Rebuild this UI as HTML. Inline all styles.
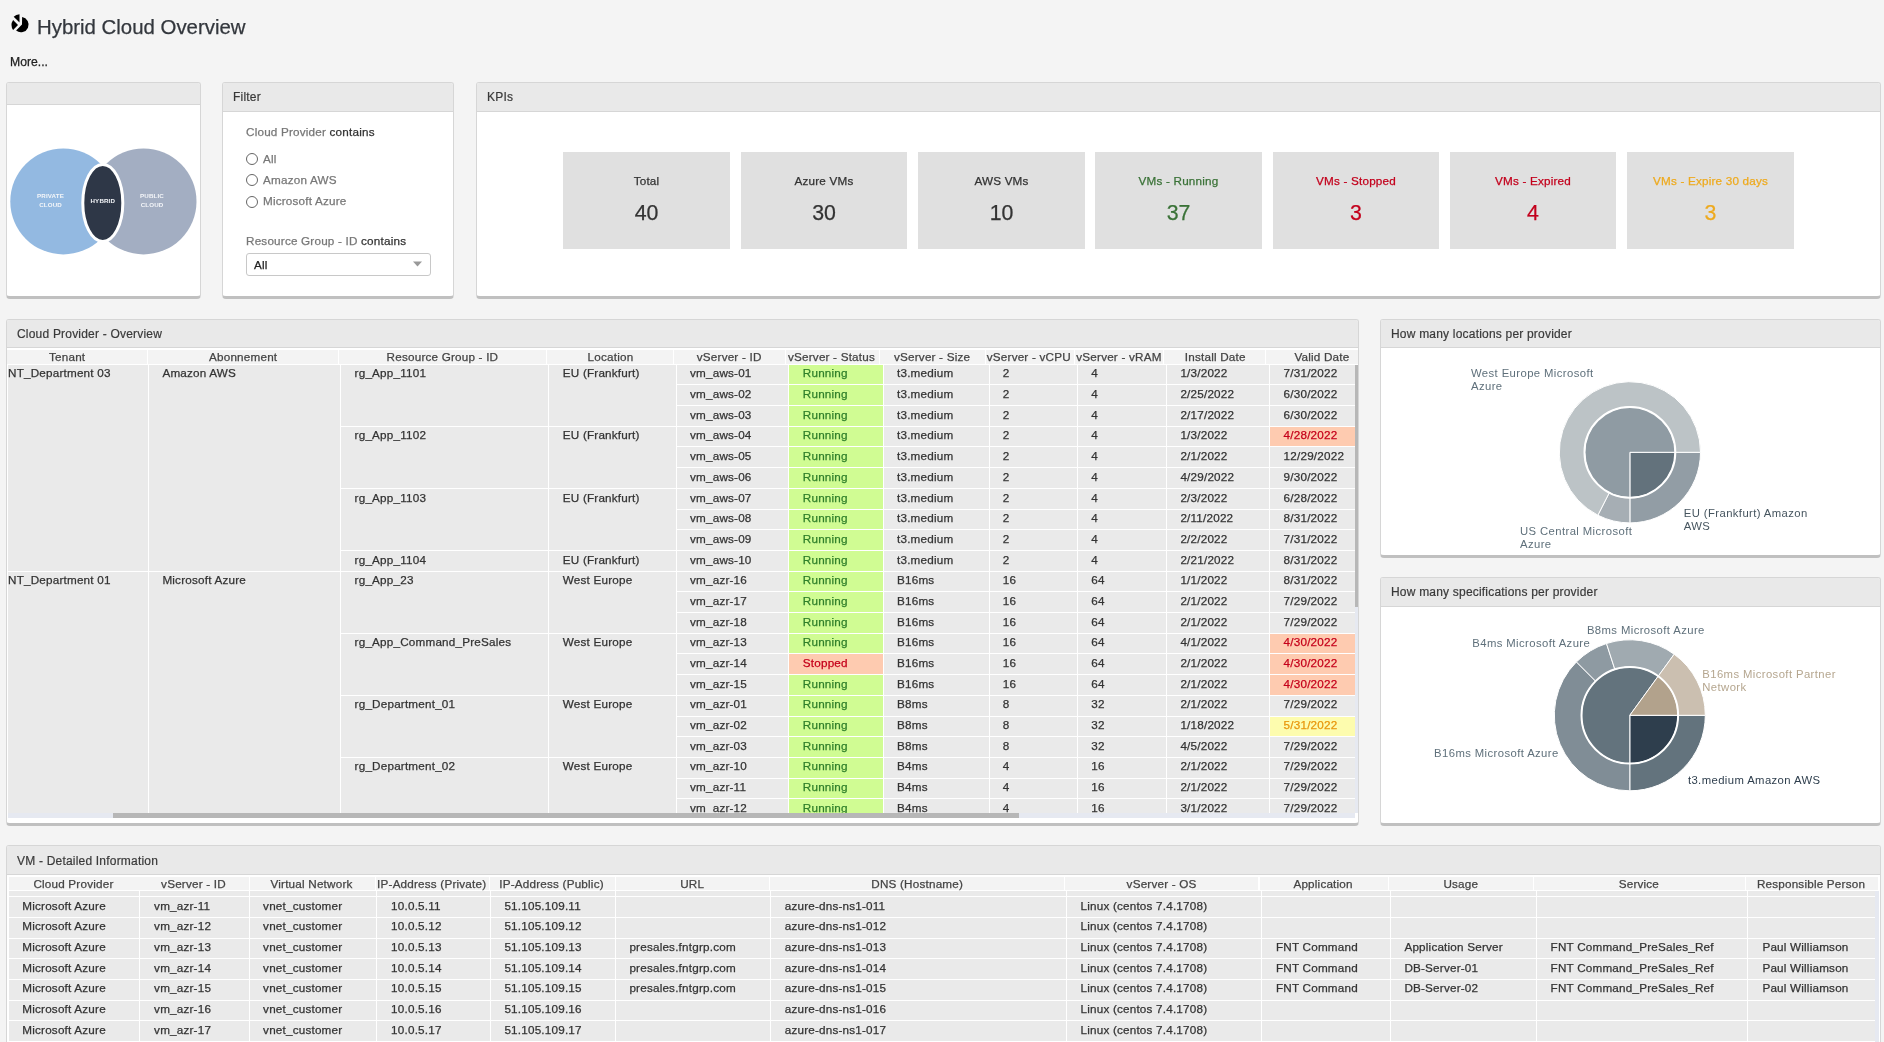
<!DOCTYPE html><html><head><meta charset="utf-8"><title>Hybrid Cloud Overview</title><style>
*{margin:0;padding:0;box-sizing:border-box}
html,body{width:1884px;height:1042px;overflow:hidden;background:#f4f4f4;font-family:"Liberation Sans", sans-serif;color:#333}
.a{position:absolute}
.pn{position:absolute;background:#fff;border:1px solid #d6d6d6;border-bottom:3px solid #c0c0c0;border-radius:3px 3px 4px 4px;overflow:hidden}
.ph{position:absolute;left:0;right:0;top:0;background:#e9e9e9;border-bottom:1px solid #d6d6d6}
.pt{position:absolute;font-size:12px;letter-spacing:0.2px;color:#3a3a3a;white-space:nowrap;line-height:14px;-webkit-text-stroke:0.2px currentColor}
.t{position:absolute;white-space:nowrap;font-size:12.2px;line-height:14px;color:#333;-webkit-text-stroke:0.25px currentColor}
.c{position:absolute;background:#eaeaea}
.hc{position:absolute;background:#f3f3f3;text-align:center;font-size:12.2px;line-height:14px;color:#444;white-space:nowrap;overflow:hidden}
</style></head><body><div style="position:absolute;left:0;top:0;width:1884px;height:1042px;overflow:hidden;will-change:transform">
<svg class="a" style="left:0;top:0" width="40" height="40" viewBox="0 0 40 40"><path d="M22,24.6 L22.1,17 A7.7,7.7 0 1 1 16.1,30.6 Z" fill="#000"/><path d="M19.5,22.5 L19.5,14.2 A8.3,8.3 0 0 0 13.7,16.7 Z" fill="#000"/><path d="M18,25 L13.1,20 A9.2,9.2 0 0 0 13.1,30 Z" fill="#000"/></svg>
<div class="t" style="left:37px;top:15px;font-size:20.4px;line-height:24px;color:#33373d">Hybrid Cloud Overview</div>
<div class="t" style="left:10px;top:55px;font-size:12.2px;color:#222">More...</div>
<div class="pn" style="left:6px;top:82px;width:195px;height:217px"><div class="ph" style="height:22px"></div></div>
<div class="pn" style="left:222px;top:82px;width:232px;height:217px"><div class="ph" style="height:29px"></div></div>
<div class="pt" style="left:233px;top:90px">Filter</div>
<div class="pn" style="left:476px;top:82px;width:1405px;height:217px"><div class="ph" style="height:29px"></div></div>
<div class="pt" style="left:487px;top:90px">KPIs</div>
<svg class="a" style="left:0;top:140px" width="210" height="130" viewBox="0 140 210 130"><circle cx="63.3" cy="201.4" r="53" fill="#93b9e1"/><circle cx="143.5" cy="201.4" r="53" fill="#a3aec2"/><ellipse cx="102.8" cy="202.9" rx="20" ry="38.5" fill="#2e3747" stroke="#fff" stroke-width="3"/><g font-family="Liberation Sans" font-weight="bold" font-size="6.2" letter-spacing="0.15" fill="#f4f6f9" text-anchor="middle"><text x="50.5" y="198">PRIVATE</text><text x="50.5" y="206.5">CLOUD</text><text x="102.8" y="203">HYBRID</text><text x="152" y="198">PUBLIC</text><text x="152" y="206.5">CLOUD</text></g></svg>
<div class="t" style="left:246px;top:125.2px;font-size:11.7px;letter-spacing:0.2px;color:#777">Cloud Provider <span style="color:#333">contains</span></div>
<div class="a" style="left:246px;top:153.0px;width:12px;height:12px;border:1px solid #666;border-radius:50%;background:#fff"></div>
<div class="t" style="left:263px;top:152.3px;font-size:11.7px;letter-spacing:0.2px;color:#777">All</div>
<div class="a" style="left:246px;top:174.3px;width:12px;height:12px;border:1px solid #666;border-radius:50%;background:#fff"></div>
<div class="t" style="left:263px;top:173.4px;font-size:11.7px;letter-spacing:0.2px;color:#777">Amazon AWS</div>
<div class="a" style="left:246px;top:195.7px;width:12px;height:12px;border:1px solid #666;border-radius:50%;background:#fff"></div>
<div class="t" style="left:263px;top:194.3px;font-size:11.7px;letter-spacing:0.2px;color:#777">Microsoft Azure</div>
<div class="t" style="left:246px;top:234.2px;font-size:11.7px;letter-spacing:0.2px;color:#777">Resource Group - ID <span style="color:#333">contains</span></div>
<div class="a" style="left:246px;top:253px;width:185px;height:23px;border:1px solid #c8c8c8;border-radius:3px;background:#fff"></div>
<div class="t" style="left:254px;top:258.2px;font-size:11.7px;letter-spacing:0.2px;color:#222">All</div>
<svg class="a" style="left:412px;top:260px" width="12" height="8"><path d="M1,1.5 L10,1.5 L5.5,6.5 Z" fill="#999"/></svg>
<div class="a" style="left:563px;top:152px;width:167px;height:97px;background:#e0e0e0"></div>
<div class="t" style="left:563px;top:174.2px;width:167px;text-align:center;font-size:11.7px;letter-spacing:0.2px;color:#333">Total</div>
<div class="t" style="left:563px;top:200.7px;width:167px;text-align:center;font-size:21.3px;line-height:24px;color:#333">40</div>
<div class="a" style="left:741px;top:152px;width:166px;height:97px;background:#e0e0e0"></div>
<div class="t" style="left:741px;top:174.2px;width:166px;text-align:center;font-size:11.7px;letter-spacing:0.2px;color:#333">Azure VMs</div>
<div class="t" style="left:741px;top:200.7px;width:166px;text-align:center;font-size:21.3px;line-height:24px;color:#333">30</div>
<div class="a" style="left:918px;top:152px;width:167px;height:97px;background:#e0e0e0"></div>
<div class="t" style="left:918px;top:174.2px;width:167px;text-align:center;font-size:11.7px;letter-spacing:0.2px;color:#333">AWS VMs</div>
<div class="t" style="left:918px;top:200.7px;width:167px;text-align:center;font-size:21.3px;line-height:24px;color:#333">10</div>
<div class="a" style="left:1095px;top:152px;width:167px;height:97px;background:#e0e0e0"></div>
<div class="t" style="left:1095px;top:174.2px;width:167px;text-align:center;font-size:11.7px;letter-spacing:0.2px;color:#3a7237">VMs - Running</div>
<div class="t" style="left:1095px;top:200.7px;width:167px;text-align:center;font-size:21.3px;line-height:24px;color:#3a7237">37</div>
<div class="a" style="left:1273px;top:152px;width:166px;height:97px;background:#e0e0e0"></div>
<div class="t" style="left:1273px;top:174.2px;width:166px;text-align:center;font-size:11.7px;letter-spacing:0.2px;color:#c3001c">VMs - Stopped</div>
<div class="t" style="left:1273px;top:200.7px;width:166px;text-align:center;font-size:21.3px;line-height:24px;color:#c3001c">3</div>
<div class="a" style="left:1450px;top:152px;width:166px;height:97px;background:#e0e0e0"></div>
<div class="t" style="left:1450px;top:174.2px;width:166px;text-align:center;font-size:11.7px;letter-spacing:0.2px;color:#c3001c">VMs - Expired</div>
<div class="t" style="left:1450px;top:200.7px;width:166px;text-align:center;font-size:21.3px;line-height:24px;color:#c3001c">4</div>
<div class="a" style="left:1627px;top:152px;width:167px;height:97px;background:#e0e0e0"></div>
<div class="t" style="left:1627px;top:174.2px;width:167px;text-align:center;font-size:11.7px;letter-spacing:0.2px;color:#eeaa1e">VMs - Expire 30 days</div>
<div class="t" style="left:1627px;top:200.7px;width:167px;text-align:center;font-size:21.3px;line-height:24px;color:#eeaa1e">3</div>
<div class="pn" style="left:6px;top:319px;width:1353px;height:507px"><div class="ph" style="height:28px"></div></div>
<div class="pt" style="left:17px;top:327px">Cloud Provider - Overview</div>
<div class="pn" style="left:1380px;top:319px;width:501px;height:239px"><div class="ph" style="height:28px"></div></div>
<div class="pt" style="left:1391px;top:327px">How many locations per provider</div>
<div class="pn" style="left:1380px;top:577px;width:501px;height:249px"><div class="ph" style="height:29px"></div></div>
<div class="pt" style="left:1391px;top:585px">How many specifications per provider</div>
<div class="pn" style="left:6px;top:845px;width:1875px;height:255px"><div class="ph" style="height:29px"></div></div>
<div class="pt" style="left:17px;top:854px">VM - Detailed Information</div>
<div class="a" style="left:7.00px;top:348.00px;width:1351.00px;height:470.00px;background:#fff;"></div>
<div class="a" style="left:7.00px;top:349.50px;width:140.00px;height:14.30px;background:#f3f3f3;"></div>
<div class="t" style="left:49.0px;top:349.15px;font-size:11.7px;line-height:16px;color:#444;letter-spacing:0.2px;">Tenant</div>
<div class="a" style="left:148.00px;top:349.50px;width:190.00px;height:14.30px;background:#f3f3f3;"></div>
<div class="t" style="left:209.0px;top:349.15px;font-size:11.7px;line-height:16px;color:#444;letter-spacing:0.2px;">Abonnement</div>
<div class="a" style="left:339.00px;top:349.50px;width:207.00px;height:14.30px;background:#f3f3f3;"></div>
<div class="t" style="left:386.6px;top:349.15px;font-size:11.7px;line-height:16px;color:#444;letter-spacing:0.2px;">Resource Group - ID</div>
<div class="a" style="left:547.00px;top:349.50px;width:126.00px;height:14.30px;background:#f3f3f3;"></div>
<div class="t" style="left:587.6px;top:349.15px;font-size:11.7px;line-height:16px;color:#444;letter-spacing:0.2px;">Location</div>
<div class="a" style="left:674.00px;top:349.50px;width:111.00px;height:14.30px;background:#f3f3f3;"></div>
<div class="t" style="left:696.8px;top:349.15px;font-size:11.7px;line-height:16px;color:#444;letter-spacing:0.2px;">vServer - ID</div>
<div class="a" style="left:786.00px;top:349.50px;width:93.00px;height:14.30px;background:#f3f3f3;"></div>
<div class="t" style="left:788.0px;top:349.15px;font-size:11.7px;line-height:16px;color:#444;letter-spacing:0.2px;">vServer - Status</div>
<div class="a" style="left:880.00px;top:349.50px;width:105.00px;height:14.30px;background:#f3f3f3;"></div>
<div class="t" style="left:894.0px;top:349.15px;font-size:11.7px;line-height:16px;color:#444;letter-spacing:0.2px;">vServer - Size</div>
<div class="a" style="left:986.00px;top:349.50px;width:88.00px;height:14.30px;background:#f3f3f3;"></div>
<div class="t" style="left:986.8px;top:349.15px;font-size:11.7px;line-height:16px;color:#444;letter-spacing:0.2px;">vServer - vCPU</div>
<div class="a" style="left:1075.00px;top:349.50px;width:88.00px;height:14.30px;background:#f3f3f3;"></div>
<div class="t" style="left:1076.3px;top:349.15px;font-size:11.7px;line-height:16px;color:#444;letter-spacing:0.2px;">vServer - vRAM</div>
<div class="a" style="left:1164.00px;top:349.50px;width:101.00px;height:14.30px;background:#f3f3f3;"></div>
<div class="t" style="left:1184.8px;top:349.15px;font-size:11.7px;line-height:16px;color:#444;letter-spacing:0.2px;">Install Date</div>
<div class="a" style="left:1266.00px;top:349.50px;width:92.00px;height:14.30px;background:#f3f3f3;"></div>
<div class="t" style="left:1294.4px;top:349.15px;font-size:11.7px;line-height:16px;color:#444;letter-spacing:0.2px;">Valid Date</div>
<div class="a" style="left:0;top:0;width:1884px;height:812.7px;overflow:hidden">
<div class="a" style="left:677.00px;top:365.00px;width:111.00px;height:19.00px;background:#eaeaea;"></div>
<div class="a" style="left:789.00px;top:365.00px;width:94.00px;height:19.00px;background:#d0fc93;"></div>
<div class="a" style="left:884.00px;top:365.00px;width:105.00px;height:19.00px;background:#eaeaea;"></div>
<div class="a" style="left:990.00px;top:365.00px;width:87.00px;height:19.00px;background:#eaeaea;"></div>
<div class="a" style="left:1078.00px;top:365.00px;width:88.00px;height:19.00px;background:#eaeaea;"></div>
<div class="a" style="left:1167.00px;top:365.00px;width:102.00px;height:19.00px;background:#eaeaea;"></div>
<div class="a" style="left:1270.00px;top:365.00px;width:85.00px;height:19.00px;background:#eaeaea;"></div>
<div class="t" style="left:690.0px;top:365.15px;font-size:11.7px;line-height:16px;color:#333;letter-spacing:0.2px;">vm_aws-01</div>
<div class="t" style="left:802.8px;top:365.15px;font-size:11.7px;line-height:16px;color:#2f7f2a;letter-spacing:0.2px;">Running</div>
<div class="t" style="left:897.0px;top:365.15px;font-size:11.7px;line-height:16px;color:#333;letter-spacing:0.2px;">t3.medium</div>
<div class="t" style="left:1002.7px;top:365.15px;font-size:11.7px;line-height:16px;color:#333;letter-spacing:0.2px;">2</div>
<div class="t" style="left:1091.2px;top:365.15px;font-size:11.7px;line-height:16px;color:#333;letter-spacing:0.2px;">4</div>
<div class="t" style="left:1180.4px;top:365.15px;font-size:11.7px;line-height:16px;color:#333;letter-spacing:0.2px;">1/3/2022</div>
<div class="t" style="left:1283.6px;top:365.15px;font-size:11.7px;line-height:16px;color:#333;letter-spacing:0.2px;">7/31/2022</div>
<div class="a" style="left:677.00px;top:385.00px;width:111.00px;height:20.00px;background:#eaeaea;"></div>
<div class="a" style="left:789.00px;top:385.00px;width:94.00px;height:20.00px;background:#d0fc93;"></div>
<div class="a" style="left:884.00px;top:385.00px;width:105.00px;height:20.00px;background:#eaeaea;"></div>
<div class="a" style="left:990.00px;top:385.00px;width:87.00px;height:20.00px;background:#eaeaea;"></div>
<div class="a" style="left:1078.00px;top:385.00px;width:88.00px;height:20.00px;background:#eaeaea;"></div>
<div class="a" style="left:1167.00px;top:385.00px;width:102.00px;height:20.00px;background:#eaeaea;"></div>
<div class="a" style="left:1270.00px;top:385.00px;width:85.00px;height:20.00px;background:#eaeaea;"></div>
<div class="t" style="left:690.0px;top:386.15px;font-size:11.7px;line-height:16px;color:#333;letter-spacing:0.2px;">vm_aws-02</div>
<div class="t" style="left:802.8px;top:386.15px;font-size:11.7px;line-height:16px;color:#2f7f2a;letter-spacing:0.2px;">Running</div>
<div class="t" style="left:897.0px;top:386.15px;font-size:11.7px;line-height:16px;color:#333;letter-spacing:0.2px;">t3.medium</div>
<div class="t" style="left:1002.7px;top:386.15px;font-size:11.7px;line-height:16px;color:#333;letter-spacing:0.2px;">2</div>
<div class="t" style="left:1091.2px;top:386.15px;font-size:11.7px;line-height:16px;color:#333;letter-spacing:0.2px;">4</div>
<div class="t" style="left:1180.4px;top:386.15px;font-size:11.7px;line-height:16px;color:#333;letter-spacing:0.2px;">2/25/2022</div>
<div class="t" style="left:1283.6px;top:386.15px;font-size:11.7px;line-height:16px;color:#333;letter-spacing:0.2px;">6/30/2022</div>
<div class="a" style="left:677.00px;top:406.00px;width:111.00px;height:20.00px;background:#eaeaea;"></div>
<div class="a" style="left:789.00px;top:406.00px;width:94.00px;height:20.00px;background:#d0fc93;"></div>
<div class="a" style="left:884.00px;top:406.00px;width:105.00px;height:20.00px;background:#eaeaea;"></div>
<div class="a" style="left:990.00px;top:406.00px;width:87.00px;height:20.00px;background:#eaeaea;"></div>
<div class="a" style="left:1078.00px;top:406.00px;width:88.00px;height:20.00px;background:#eaeaea;"></div>
<div class="a" style="left:1167.00px;top:406.00px;width:102.00px;height:20.00px;background:#eaeaea;"></div>
<div class="a" style="left:1270.00px;top:406.00px;width:85.00px;height:20.00px;background:#eaeaea;"></div>
<div class="t" style="left:690.0px;top:407.15px;font-size:11.7px;line-height:16px;color:#333;letter-spacing:0.2px;">vm_aws-03</div>
<div class="t" style="left:802.8px;top:407.15px;font-size:11.7px;line-height:16px;color:#2f7f2a;letter-spacing:0.2px;">Running</div>
<div class="t" style="left:897.0px;top:407.15px;font-size:11.7px;line-height:16px;color:#333;letter-spacing:0.2px;">t3.medium</div>
<div class="t" style="left:1002.7px;top:407.15px;font-size:11.7px;line-height:16px;color:#333;letter-spacing:0.2px;">2</div>
<div class="t" style="left:1091.2px;top:407.15px;font-size:11.7px;line-height:16px;color:#333;letter-spacing:0.2px;">4</div>
<div class="t" style="left:1180.4px;top:407.15px;font-size:11.7px;line-height:16px;color:#333;letter-spacing:0.2px;">2/17/2022</div>
<div class="t" style="left:1283.6px;top:407.15px;font-size:11.7px;line-height:16px;color:#333;letter-spacing:0.2px;">6/30/2022</div>
<div class="a" style="left:677.00px;top:427.00px;width:111.00px;height:19.00px;background:#eaeaea;"></div>
<div class="a" style="left:789.00px;top:427.00px;width:94.00px;height:19.00px;background:#d0fc93;"></div>
<div class="a" style="left:884.00px;top:427.00px;width:105.00px;height:19.00px;background:#eaeaea;"></div>
<div class="a" style="left:990.00px;top:427.00px;width:87.00px;height:19.00px;background:#eaeaea;"></div>
<div class="a" style="left:1078.00px;top:427.00px;width:88.00px;height:19.00px;background:#eaeaea;"></div>
<div class="a" style="left:1167.00px;top:427.00px;width:102.00px;height:19.00px;background:#eaeaea;"></div>
<div class="a" style="left:1270.00px;top:427.00px;width:85.00px;height:19.00px;background:#fecbb0;"></div>
<div class="t" style="left:690.0px;top:427.15px;font-size:11.7px;line-height:16px;color:#333;letter-spacing:0.2px;">vm_aws-04</div>
<div class="t" style="left:802.8px;top:427.15px;font-size:11.7px;line-height:16px;color:#2f7f2a;letter-spacing:0.2px;">Running</div>
<div class="t" style="left:897.0px;top:427.15px;font-size:11.7px;line-height:16px;color:#333;letter-spacing:0.2px;">t3.medium</div>
<div class="t" style="left:1002.7px;top:427.15px;font-size:11.7px;line-height:16px;color:#333;letter-spacing:0.2px;">2</div>
<div class="t" style="left:1091.2px;top:427.15px;font-size:11.7px;line-height:16px;color:#333;letter-spacing:0.2px;">4</div>
<div class="t" style="left:1180.4px;top:427.15px;font-size:11.7px;line-height:16px;color:#333;letter-spacing:0.2px;">1/3/2022</div>
<div class="t" style="left:1283.6px;top:427.15px;font-size:11.7px;line-height:16px;color:#c5001a;letter-spacing:0.2px;">4/28/2022</div>
<div class="a" style="left:677.00px;top:447.00px;width:111.00px;height:20.00px;background:#eaeaea;"></div>
<div class="a" style="left:789.00px;top:447.00px;width:94.00px;height:20.00px;background:#d0fc93;"></div>
<div class="a" style="left:884.00px;top:447.00px;width:105.00px;height:20.00px;background:#eaeaea;"></div>
<div class="a" style="left:990.00px;top:447.00px;width:87.00px;height:20.00px;background:#eaeaea;"></div>
<div class="a" style="left:1078.00px;top:447.00px;width:88.00px;height:20.00px;background:#eaeaea;"></div>
<div class="a" style="left:1167.00px;top:447.00px;width:102.00px;height:20.00px;background:#eaeaea;"></div>
<div class="a" style="left:1270.00px;top:447.00px;width:85.00px;height:20.00px;background:#eaeaea;"></div>
<div class="t" style="left:690.0px;top:448.15px;font-size:11.7px;line-height:16px;color:#333;letter-spacing:0.2px;">vm_aws-05</div>
<div class="t" style="left:802.8px;top:448.15px;font-size:11.7px;line-height:16px;color:#2f7f2a;letter-spacing:0.2px;">Running</div>
<div class="t" style="left:897.0px;top:448.15px;font-size:11.7px;line-height:16px;color:#333;letter-spacing:0.2px;">t3.medium</div>
<div class="t" style="left:1002.7px;top:448.15px;font-size:11.7px;line-height:16px;color:#333;letter-spacing:0.2px;">2</div>
<div class="t" style="left:1091.2px;top:448.15px;font-size:11.7px;line-height:16px;color:#333;letter-spacing:0.2px;">4</div>
<div class="t" style="left:1180.4px;top:448.15px;font-size:11.7px;line-height:16px;color:#333;letter-spacing:0.2px;">2/1/2022</div>
<div class="t" style="left:1283.6px;top:448.15px;font-size:11.7px;line-height:16px;color:#333;letter-spacing:0.2px;">12/29/2022</div>
<div class="a" style="left:677.00px;top:468.00px;width:111.00px;height:20.00px;background:#eaeaea;"></div>
<div class="a" style="left:789.00px;top:468.00px;width:94.00px;height:20.00px;background:#d0fc93;"></div>
<div class="a" style="left:884.00px;top:468.00px;width:105.00px;height:20.00px;background:#eaeaea;"></div>
<div class="a" style="left:990.00px;top:468.00px;width:87.00px;height:20.00px;background:#eaeaea;"></div>
<div class="a" style="left:1078.00px;top:468.00px;width:88.00px;height:20.00px;background:#eaeaea;"></div>
<div class="a" style="left:1167.00px;top:468.00px;width:102.00px;height:20.00px;background:#eaeaea;"></div>
<div class="a" style="left:1270.00px;top:468.00px;width:85.00px;height:20.00px;background:#eaeaea;"></div>
<div class="t" style="left:690.0px;top:469.15px;font-size:11.7px;line-height:16px;color:#333;letter-spacing:0.2px;">vm_aws-06</div>
<div class="t" style="left:802.8px;top:469.15px;font-size:11.7px;line-height:16px;color:#2f7f2a;letter-spacing:0.2px;">Running</div>
<div class="t" style="left:897.0px;top:469.15px;font-size:11.7px;line-height:16px;color:#333;letter-spacing:0.2px;">t3.medium</div>
<div class="t" style="left:1002.7px;top:469.15px;font-size:11.7px;line-height:16px;color:#333;letter-spacing:0.2px;">2</div>
<div class="t" style="left:1091.2px;top:469.15px;font-size:11.7px;line-height:16px;color:#333;letter-spacing:0.2px;">4</div>
<div class="t" style="left:1180.4px;top:469.15px;font-size:11.7px;line-height:16px;color:#333;letter-spacing:0.2px;">4/29/2022</div>
<div class="t" style="left:1283.6px;top:469.15px;font-size:11.7px;line-height:16px;color:#333;letter-spacing:0.2px;">9/30/2022</div>
<div class="a" style="left:677.00px;top:489.00px;width:111.00px;height:20.00px;background:#eaeaea;"></div>
<div class="a" style="left:789.00px;top:489.00px;width:94.00px;height:20.00px;background:#d0fc93;"></div>
<div class="a" style="left:884.00px;top:489.00px;width:105.00px;height:20.00px;background:#eaeaea;"></div>
<div class="a" style="left:990.00px;top:489.00px;width:87.00px;height:20.00px;background:#eaeaea;"></div>
<div class="a" style="left:1078.00px;top:489.00px;width:88.00px;height:20.00px;background:#eaeaea;"></div>
<div class="a" style="left:1167.00px;top:489.00px;width:102.00px;height:20.00px;background:#eaeaea;"></div>
<div class="a" style="left:1270.00px;top:489.00px;width:85.00px;height:20.00px;background:#eaeaea;"></div>
<div class="t" style="left:690.0px;top:490.15px;font-size:11.7px;line-height:16px;color:#333;letter-spacing:0.2px;">vm_aws-07</div>
<div class="t" style="left:802.8px;top:490.15px;font-size:11.7px;line-height:16px;color:#2f7f2a;letter-spacing:0.2px;">Running</div>
<div class="t" style="left:897.0px;top:490.15px;font-size:11.7px;line-height:16px;color:#333;letter-spacing:0.2px;">t3.medium</div>
<div class="t" style="left:1002.7px;top:490.15px;font-size:11.7px;line-height:16px;color:#333;letter-spacing:0.2px;">2</div>
<div class="t" style="left:1091.2px;top:490.15px;font-size:11.7px;line-height:16px;color:#333;letter-spacing:0.2px;">4</div>
<div class="t" style="left:1180.4px;top:490.15px;font-size:11.7px;line-height:16px;color:#333;letter-spacing:0.2px;">2/3/2022</div>
<div class="t" style="left:1283.6px;top:490.15px;font-size:11.7px;line-height:16px;color:#333;letter-spacing:0.2px;">6/28/2022</div>
<div class="a" style="left:677.00px;top:510.00px;width:111.00px;height:19.00px;background:#eaeaea;"></div>
<div class="a" style="left:789.00px;top:510.00px;width:94.00px;height:19.00px;background:#d0fc93;"></div>
<div class="a" style="left:884.00px;top:510.00px;width:105.00px;height:19.00px;background:#eaeaea;"></div>
<div class="a" style="left:990.00px;top:510.00px;width:87.00px;height:19.00px;background:#eaeaea;"></div>
<div class="a" style="left:1078.00px;top:510.00px;width:88.00px;height:19.00px;background:#eaeaea;"></div>
<div class="a" style="left:1167.00px;top:510.00px;width:102.00px;height:19.00px;background:#eaeaea;"></div>
<div class="a" style="left:1270.00px;top:510.00px;width:85.00px;height:19.00px;background:#eaeaea;"></div>
<div class="t" style="left:690.0px;top:510.15px;font-size:11.7px;line-height:16px;color:#333;letter-spacing:0.2px;">vm_aws-08</div>
<div class="t" style="left:802.8px;top:510.15px;font-size:11.7px;line-height:16px;color:#2f7f2a;letter-spacing:0.2px;">Running</div>
<div class="t" style="left:897.0px;top:510.15px;font-size:11.7px;line-height:16px;color:#333;letter-spacing:0.2px;">t3.medium</div>
<div class="t" style="left:1002.7px;top:510.15px;font-size:11.7px;line-height:16px;color:#333;letter-spacing:0.2px;">2</div>
<div class="t" style="left:1091.2px;top:510.15px;font-size:11.7px;line-height:16px;color:#333;letter-spacing:0.2px;">4</div>
<div class="t" style="left:1180.4px;top:510.15px;font-size:11.7px;line-height:16px;color:#333;letter-spacing:0.2px;">2/11/2022</div>
<div class="t" style="left:1283.6px;top:510.15px;font-size:11.7px;line-height:16px;color:#333;letter-spacing:0.2px;">8/31/2022</div>
<div class="a" style="left:677.00px;top:530.00px;width:111.00px;height:20.00px;background:#eaeaea;"></div>
<div class="a" style="left:789.00px;top:530.00px;width:94.00px;height:20.00px;background:#d0fc93;"></div>
<div class="a" style="left:884.00px;top:530.00px;width:105.00px;height:20.00px;background:#eaeaea;"></div>
<div class="a" style="left:990.00px;top:530.00px;width:87.00px;height:20.00px;background:#eaeaea;"></div>
<div class="a" style="left:1078.00px;top:530.00px;width:88.00px;height:20.00px;background:#eaeaea;"></div>
<div class="a" style="left:1167.00px;top:530.00px;width:102.00px;height:20.00px;background:#eaeaea;"></div>
<div class="a" style="left:1270.00px;top:530.00px;width:85.00px;height:20.00px;background:#eaeaea;"></div>
<div class="t" style="left:690.0px;top:531.15px;font-size:11.7px;line-height:16px;color:#333;letter-spacing:0.2px;">vm_aws-09</div>
<div class="t" style="left:802.8px;top:531.15px;font-size:11.7px;line-height:16px;color:#2f7f2a;letter-spacing:0.2px;">Running</div>
<div class="t" style="left:897.0px;top:531.15px;font-size:11.7px;line-height:16px;color:#333;letter-spacing:0.2px;">t3.medium</div>
<div class="t" style="left:1002.7px;top:531.15px;font-size:11.7px;line-height:16px;color:#333;letter-spacing:0.2px;">2</div>
<div class="t" style="left:1091.2px;top:531.15px;font-size:11.7px;line-height:16px;color:#333;letter-spacing:0.2px;">4</div>
<div class="t" style="left:1180.4px;top:531.15px;font-size:11.7px;line-height:16px;color:#333;letter-spacing:0.2px;">2/2/2022</div>
<div class="t" style="left:1283.6px;top:531.15px;font-size:11.7px;line-height:16px;color:#333;letter-spacing:0.2px;">7/31/2022</div>
<div class="a" style="left:677.00px;top:551.00px;width:111.00px;height:20.00px;background:#eaeaea;"></div>
<div class="a" style="left:789.00px;top:551.00px;width:94.00px;height:20.00px;background:#d0fc93;"></div>
<div class="a" style="left:884.00px;top:551.00px;width:105.00px;height:20.00px;background:#eaeaea;"></div>
<div class="a" style="left:990.00px;top:551.00px;width:87.00px;height:20.00px;background:#eaeaea;"></div>
<div class="a" style="left:1078.00px;top:551.00px;width:88.00px;height:20.00px;background:#eaeaea;"></div>
<div class="a" style="left:1167.00px;top:551.00px;width:102.00px;height:20.00px;background:#eaeaea;"></div>
<div class="a" style="left:1270.00px;top:551.00px;width:85.00px;height:20.00px;background:#eaeaea;"></div>
<div class="t" style="left:690.0px;top:552.15px;font-size:11.7px;line-height:16px;color:#333;letter-spacing:0.2px;">vm_aws-10</div>
<div class="t" style="left:802.8px;top:552.15px;font-size:11.7px;line-height:16px;color:#2f7f2a;letter-spacing:0.2px;">Running</div>
<div class="t" style="left:897.0px;top:552.15px;font-size:11.7px;line-height:16px;color:#333;letter-spacing:0.2px;">t3.medium</div>
<div class="t" style="left:1002.7px;top:552.15px;font-size:11.7px;line-height:16px;color:#333;letter-spacing:0.2px;">2</div>
<div class="t" style="left:1091.2px;top:552.15px;font-size:11.7px;line-height:16px;color:#333;letter-spacing:0.2px;">4</div>
<div class="t" style="left:1180.4px;top:552.15px;font-size:11.7px;line-height:16px;color:#333;letter-spacing:0.2px;">2/21/2022</div>
<div class="t" style="left:1283.6px;top:552.15px;font-size:11.7px;line-height:16px;color:#333;letter-spacing:0.2px;">8/31/2022</div>
<div class="a" style="left:677.00px;top:572.00px;width:111.00px;height:19.00px;background:#eaeaea;"></div>
<div class="a" style="left:789.00px;top:572.00px;width:94.00px;height:19.00px;background:#d0fc93;"></div>
<div class="a" style="left:884.00px;top:572.00px;width:105.00px;height:19.00px;background:#eaeaea;"></div>
<div class="a" style="left:990.00px;top:572.00px;width:87.00px;height:19.00px;background:#eaeaea;"></div>
<div class="a" style="left:1078.00px;top:572.00px;width:88.00px;height:19.00px;background:#eaeaea;"></div>
<div class="a" style="left:1167.00px;top:572.00px;width:102.00px;height:19.00px;background:#eaeaea;"></div>
<div class="a" style="left:1270.00px;top:572.00px;width:85.00px;height:19.00px;background:#eaeaea;"></div>
<div class="t" style="left:690.0px;top:572.15px;font-size:11.7px;line-height:16px;color:#333;letter-spacing:0.2px;">vm_azr-16</div>
<div class="t" style="left:802.8px;top:572.15px;font-size:11.7px;line-height:16px;color:#2f7f2a;letter-spacing:0.2px;">Running</div>
<div class="t" style="left:897.0px;top:572.15px;font-size:11.7px;line-height:16px;color:#333;letter-spacing:0.2px;">B16ms</div>
<div class="t" style="left:1002.7px;top:572.15px;font-size:11.7px;line-height:16px;color:#333;letter-spacing:0.2px;">16</div>
<div class="t" style="left:1091.2px;top:572.15px;font-size:11.7px;line-height:16px;color:#333;letter-spacing:0.2px;">64</div>
<div class="t" style="left:1180.4px;top:572.15px;font-size:11.7px;line-height:16px;color:#333;letter-spacing:0.2px;">1/1/2022</div>
<div class="t" style="left:1283.6px;top:572.15px;font-size:11.7px;line-height:16px;color:#333;letter-spacing:0.2px;">8/31/2022</div>
<div class="a" style="left:677.00px;top:592.00px;width:111.00px;height:20.00px;background:#eaeaea;"></div>
<div class="a" style="left:789.00px;top:592.00px;width:94.00px;height:20.00px;background:#d0fc93;"></div>
<div class="a" style="left:884.00px;top:592.00px;width:105.00px;height:20.00px;background:#eaeaea;"></div>
<div class="a" style="left:990.00px;top:592.00px;width:87.00px;height:20.00px;background:#eaeaea;"></div>
<div class="a" style="left:1078.00px;top:592.00px;width:88.00px;height:20.00px;background:#eaeaea;"></div>
<div class="a" style="left:1167.00px;top:592.00px;width:102.00px;height:20.00px;background:#eaeaea;"></div>
<div class="a" style="left:1270.00px;top:592.00px;width:85.00px;height:20.00px;background:#eaeaea;"></div>
<div class="t" style="left:690.0px;top:593.15px;font-size:11.7px;line-height:16px;color:#333;letter-spacing:0.2px;">vm_azr-17</div>
<div class="t" style="left:802.8px;top:593.15px;font-size:11.7px;line-height:16px;color:#2f7f2a;letter-spacing:0.2px;">Running</div>
<div class="t" style="left:897.0px;top:593.15px;font-size:11.7px;line-height:16px;color:#333;letter-spacing:0.2px;">B16ms</div>
<div class="t" style="left:1002.7px;top:593.15px;font-size:11.7px;line-height:16px;color:#333;letter-spacing:0.2px;">16</div>
<div class="t" style="left:1091.2px;top:593.15px;font-size:11.7px;line-height:16px;color:#333;letter-spacing:0.2px;">64</div>
<div class="t" style="left:1180.4px;top:593.15px;font-size:11.7px;line-height:16px;color:#333;letter-spacing:0.2px;">2/1/2022</div>
<div class="t" style="left:1283.6px;top:593.15px;font-size:11.7px;line-height:16px;color:#333;letter-spacing:0.2px;">7/29/2022</div>
<div class="a" style="left:677.00px;top:613.00px;width:111.00px;height:20.00px;background:#eaeaea;"></div>
<div class="a" style="left:789.00px;top:613.00px;width:94.00px;height:20.00px;background:#d0fc93;"></div>
<div class="a" style="left:884.00px;top:613.00px;width:105.00px;height:20.00px;background:#eaeaea;"></div>
<div class="a" style="left:990.00px;top:613.00px;width:87.00px;height:20.00px;background:#eaeaea;"></div>
<div class="a" style="left:1078.00px;top:613.00px;width:88.00px;height:20.00px;background:#eaeaea;"></div>
<div class="a" style="left:1167.00px;top:613.00px;width:102.00px;height:20.00px;background:#eaeaea;"></div>
<div class="a" style="left:1270.00px;top:613.00px;width:85.00px;height:20.00px;background:#eaeaea;"></div>
<div class="t" style="left:690.0px;top:614.15px;font-size:11.7px;line-height:16px;color:#333;letter-spacing:0.2px;">vm_azr-18</div>
<div class="t" style="left:802.8px;top:614.15px;font-size:11.7px;line-height:16px;color:#2f7f2a;letter-spacing:0.2px;">Running</div>
<div class="t" style="left:897.0px;top:614.15px;font-size:11.7px;line-height:16px;color:#333;letter-spacing:0.2px;">B16ms</div>
<div class="t" style="left:1002.7px;top:614.15px;font-size:11.7px;line-height:16px;color:#333;letter-spacing:0.2px;">16</div>
<div class="t" style="left:1091.2px;top:614.15px;font-size:11.7px;line-height:16px;color:#333;letter-spacing:0.2px;">64</div>
<div class="t" style="left:1180.4px;top:614.15px;font-size:11.7px;line-height:16px;color:#333;letter-spacing:0.2px;">2/1/2022</div>
<div class="t" style="left:1283.6px;top:614.15px;font-size:11.7px;line-height:16px;color:#333;letter-spacing:0.2px;">7/29/2022</div>
<div class="a" style="left:677.00px;top:634.00px;width:111.00px;height:19.00px;background:#eaeaea;"></div>
<div class="a" style="left:789.00px;top:634.00px;width:94.00px;height:19.00px;background:#d0fc93;"></div>
<div class="a" style="left:884.00px;top:634.00px;width:105.00px;height:19.00px;background:#eaeaea;"></div>
<div class="a" style="left:990.00px;top:634.00px;width:87.00px;height:19.00px;background:#eaeaea;"></div>
<div class="a" style="left:1078.00px;top:634.00px;width:88.00px;height:19.00px;background:#eaeaea;"></div>
<div class="a" style="left:1167.00px;top:634.00px;width:102.00px;height:19.00px;background:#eaeaea;"></div>
<div class="a" style="left:1270.00px;top:634.00px;width:85.00px;height:19.00px;background:#fecbb0;"></div>
<div class="t" style="left:690.0px;top:634.15px;font-size:11.7px;line-height:16px;color:#333;letter-spacing:0.2px;">vm_azr-13</div>
<div class="t" style="left:802.8px;top:634.15px;font-size:11.7px;line-height:16px;color:#2f7f2a;letter-spacing:0.2px;">Running</div>
<div class="t" style="left:897.0px;top:634.15px;font-size:11.7px;line-height:16px;color:#333;letter-spacing:0.2px;">B16ms</div>
<div class="t" style="left:1002.7px;top:634.15px;font-size:11.7px;line-height:16px;color:#333;letter-spacing:0.2px;">16</div>
<div class="t" style="left:1091.2px;top:634.15px;font-size:11.7px;line-height:16px;color:#333;letter-spacing:0.2px;">64</div>
<div class="t" style="left:1180.4px;top:634.15px;font-size:11.7px;line-height:16px;color:#333;letter-spacing:0.2px;">4/1/2022</div>
<div class="t" style="left:1283.6px;top:634.15px;font-size:11.7px;line-height:16px;color:#c5001a;letter-spacing:0.2px;">4/30/2022</div>
<div class="a" style="left:677.00px;top:654.00px;width:111.00px;height:20.00px;background:#eaeaea;"></div>
<div class="a" style="left:789.00px;top:654.00px;width:94.00px;height:20.00px;background:#fecbb0;"></div>
<div class="a" style="left:884.00px;top:654.00px;width:105.00px;height:20.00px;background:#eaeaea;"></div>
<div class="a" style="left:990.00px;top:654.00px;width:87.00px;height:20.00px;background:#eaeaea;"></div>
<div class="a" style="left:1078.00px;top:654.00px;width:88.00px;height:20.00px;background:#eaeaea;"></div>
<div class="a" style="left:1167.00px;top:654.00px;width:102.00px;height:20.00px;background:#eaeaea;"></div>
<div class="a" style="left:1270.00px;top:654.00px;width:85.00px;height:20.00px;background:#fecbb0;"></div>
<div class="t" style="left:690.0px;top:655.15px;font-size:11.7px;line-height:16px;color:#333;letter-spacing:0.2px;">vm_azr-14</div>
<div class="t" style="left:802.8px;top:655.15px;font-size:11.7px;line-height:16px;color:#c5001a;letter-spacing:0.2px;">Stopped</div>
<div class="t" style="left:897.0px;top:655.15px;font-size:11.7px;line-height:16px;color:#333;letter-spacing:0.2px;">B16ms</div>
<div class="t" style="left:1002.7px;top:655.15px;font-size:11.7px;line-height:16px;color:#333;letter-spacing:0.2px;">16</div>
<div class="t" style="left:1091.2px;top:655.15px;font-size:11.7px;line-height:16px;color:#333;letter-spacing:0.2px;">64</div>
<div class="t" style="left:1180.4px;top:655.15px;font-size:11.7px;line-height:16px;color:#333;letter-spacing:0.2px;">2/1/2022</div>
<div class="t" style="left:1283.6px;top:655.15px;font-size:11.7px;line-height:16px;color:#c5001a;letter-spacing:0.2px;">4/30/2022</div>
<div class="a" style="left:677.00px;top:675.00px;width:111.00px;height:20.00px;background:#eaeaea;"></div>
<div class="a" style="left:789.00px;top:675.00px;width:94.00px;height:20.00px;background:#d0fc93;"></div>
<div class="a" style="left:884.00px;top:675.00px;width:105.00px;height:20.00px;background:#eaeaea;"></div>
<div class="a" style="left:990.00px;top:675.00px;width:87.00px;height:20.00px;background:#eaeaea;"></div>
<div class="a" style="left:1078.00px;top:675.00px;width:88.00px;height:20.00px;background:#eaeaea;"></div>
<div class="a" style="left:1167.00px;top:675.00px;width:102.00px;height:20.00px;background:#eaeaea;"></div>
<div class="a" style="left:1270.00px;top:675.00px;width:85.00px;height:20.00px;background:#fecbb0;"></div>
<div class="t" style="left:690.0px;top:676.15px;font-size:11.7px;line-height:16px;color:#333;letter-spacing:0.2px;">vm_azr-15</div>
<div class="t" style="left:802.8px;top:676.15px;font-size:11.7px;line-height:16px;color:#2f7f2a;letter-spacing:0.2px;">Running</div>
<div class="t" style="left:897.0px;top:676.15px;font-size:11.7px;line-height:16px;color:#333;letter-spacing:0.2px;">B16ms</div>
<div class="t" style="left:1002.7px;top:676.15px;font-size:11.7px;line-height:16px;color:#333;letter-spacing:0.2px;">16</div>
<div class="t" style="left:1091.2px;top:676.15px;font-size:11.7px;line-height:16px;color:#333;letter-spacing:0.2px;">64</div>
<div class="t" style="left:1180.4px;top:676.15px;font-size:11.7px;line-height:16px;color:#333;letter-spacing:0.2px;">2/1/2022</div>
<div class="t" style="left:1283.6px;top:676.15px;font-size:11.7px;line-height:16px;color:#c5001a;letter-spacing:0.2px;">4/30/2022</div>
<div class="a" style="left:677.00px;top:696.00px;width:111.00px;height:20.00px;background:#eaeaea;"></div>
<div class="a" style="left:789.00px;top:696.00px;width:94.00px;height:20.00px;background:#d0fc93;"></div>
<div class="a" style="left:884.00px;top:696.00px;width:105.00px;height:20.00px;background:#eaeaea;"></div>
<div class="a" style="left:990.00px;top:696.00px;width:87.00px;height:20.00px;background:#eaeaea;"></div>
<div class="a" style="left:1078.00px;top:696.00px;width:88.00px;height:20.00px;background:#eaeaea;"></div>
<div class="a" style="left:1167.00px;top:696.00px;width:102.00px;height:20.00px;background:#eaeaea;"></div>
<div class="a" style="left:1270.00px;top:696.00px;width:85.00px;height:20.00px;background:#eaeaea;"></div>
<div class="t" style="left:690.0px;top:696.15px;font-size:11.7px;line-height:16px;color:#333;letter-spacing:0.2px;">vm_azr-01</div>
<div class="t" style="left:802.8px;top:696.15px;font-size:11.7px;line-height:16px;color:#2f7f2a;letter-spacing:0.2px;">Running</div>
<div class="t" style="left:897.0px;top:696.15px;font-size:11.7px;line-height:16px;color:#333;letter-spacing:0.2px;">B8ms</div>
<div class="t" style="left:1002.7px;top:696.15px;font-size:11.7px;line-height:16px;color:#333;letter-spacing:0.2px;">8</div>
<div class="t" style="left:1091.2px;top:696.15px;font-size:11.7px;line-height:16px;color:#333;letter-spacing:0.2px;">32</div>
<div class="t" style="left:1180.4px;top:696.15px;font-size:11.7px;line-height:16px;color:#333;letter-spacing:0.2px;">2/1/2022</div>
<div class="t" style="left:1283.6px;top:696.15px;font-size:11.7px;line-height:16px;color:#333;letter-spacing:0.2px;">7/29/2022</div>
<div class="a" style="left:677.00px;top:717.00px;width:111.00px;height:19.00px;background:#eaeaea;"></div>
<div class="a" style="left:789.00px;top:717.00px;width:94.00px;height:19.00px;background:#d0fc93;"></div>
<div class="a" style="left:884.00px;top:717.00px;width:105.00px;height:19.00px;background:#eaeaea;"></div>
<div class="a" style="left:990.00px;top:717.00px;width:87.00px;height:19.00px;background:#eaeaea;"></div>
<div class="a" style="left:1078.00px;top:717.00px;width:88.00px;height:19.00px;background:#eaeaea;"></div>
<div class="a" style="left:1167.00px;top:717.00px;width:102.00px;height:19.00px;background:#eaeaea;"></div>
<div class="a" style="left:1270.00px;top:717.00px;width:85.00px;height:19.00px;background:#fdfcae;"></div>
<div class="t" style="left:690.0px;top:717.15px;font-size:11.7px;line-height:16px;color:#333;letter-spacing:0.2px;">vm_azr-02</div>
<div class="t" style="left:802.8px;top:717.15px;font-size:11.7px;line-height:16px;color:#2f7f2a;letter-spacing:0.2px;">Running</div>
<div class="t" style="left:897.0px;top:717.15px;font-size:11.7px;line-height:16px;color:#333;letter-spacing:0.2px;">B8ms</div>
<div class="t" style="left:1002.7px;top:717.15px;font-size:11.7px;line-height:16px;color:#333;letter-spacing:0.2px;">8</div>
<div class="t" style="left:1091.2px;top:717.15px;font-size:11.7px;line-height:16px;color:#333;letter-spacing:0.2px;">32</div>
<div class="t" style="left:1180.4px;top:717.15px;font-size:11.7px;line-height:16px;color:#333;letter-spacing:0.2px;">1/18/2022</div>
<div class="t" style="left:1283.6px;top:717.15px;font-size:11.7px;line-height:16px;color:#e8960c;letter-spacing:0.2px;">5/31/2022</div>
<div class="a" style="left:677.00px;top:737.00px;width:111.00px;height:20.00px;background:#eaeaea;"></div>
<div class="a" style="left:789.00px;top:737.00px;width:94.00px;height:20.00px;background:#d0fc93;"></div>
<div class="a" style="left:884.00px;top:737.00px;width:105.00px;height:20.00px;background:#eaeaea;"></div>
<div class="a" style="left:990.00px;top:737.00px;width:87.00px;height:20.00px;background:#eaeaea;"></div>
<div class="a" style="left:1078.00px;top:737.00px;width:88.00px;height:20.00px;background:#eaeaea;"></div>
<div class="a" style="left:1167.00px;top:737.00px;width:102.00px;height:20.00px;background:#eaeaea;"></div>
<div class="a" style="left:1270.00px;top:737.00px;width:85.00px;height:20.00px;background:#eaeaea;"></div>
<div class="t" style="left:690.0px;top:738.15px;font-size:11.7px;line-height:16px;color:#333;letter-spacing:0.2px;">vm_azr-03</div>
<div class="t" style="left:802.8px;top:738.15px;font-size:11.7px;line-height:16px;color:#2f7f2a;letter-spacing:0.2px;">Running</div>
<div class="t" style="left:897.0px;top:738.15px;font-size:11.7px;line-height:16px;color:#333;letter-spacing:0.2px;">B8ms</div>
<div class="t" style="left:1002.7px;top:738.15px;font-size:11.7px;line-height:16px;color:#333;letter-spacing:0.2px;">8</div>
<div class="t" style="left:1091.2px;top:738.15px;font-size:11.7px;line-height:16px;color:#333;letter-spacing:0.2px;">32</div>
<div class="t" style="left:1180.4px;top:738.15px;font-size:11.7px;line-height:16px;color:#333;letter-spacing:0.2px;">4/5/2022</div>
<div class="t" style="left:1283.6px;top:738.15px;font-size:11.7px;line-height:16px;color:#333;letter-spacing:0.2px;">7/29/2022</div>
<div class="a" style="left:677.00px;top:758.00px;width:111.00px;height:20.00px;background:#eaeaea;"></div>
<div class="a" style="left:789.00px;top:758.00px;width:94.00px;height:20.00px;background:#d0fc93;"></div>
<div class="a" style="left:884.00px;top:758.00px;width:105.00px;height:20.00px;background:#eaeaea;"></div>
<div class="a" style="left:990.00px;top:758.00px;width:87.00px;height:20.00px;background:#eaeaea;"></div>
<div class="a" style="left:1078.00px;top:758.00px;width:88.00px;height:20.00px;background:#eaeaea;"></div>
<div class="a" style="left:1167.00px;top:758.00px;width:102.00px;height:20.00px;background:#eaeaea;"></div>
<div class="a" style="left:1270.00px;top:758.00px;width:85.00px;height:20.00px;background:#eaeaea;"></div>
<div class="t" style="left:690.0px;top:758.15px;font-size:11.7px;line-height:16px;color:#333;letter-spacing:0.2px;">vm_azr-10</div>
<div class="t" style="left:802.8px;top:758.15px;font-size:11.7px;line-height:16px;color:#2f7f2a;letter-spacing:0.2px;">Running</div>
<div class="t" style="left:897.0px;top:758.15px;font-size:11.7px;line-height:16px;color:#333;letter-spacing:0.2px;">B4ms</div>
<div class="t" style="left:1002.7px;top:758.15px;font-size:11.7px;line-height:16px;color:#333;letter-spacing:0.2px;">4</div>
<div class="t" style="left:1091.2px;top:758.15px;font-size:11.7px;line-height:16px;color:#333;letter-spacing:0.2px;">16</div>
<div class="t" style="left:1180.4px;top:758.15px;font-size:11.7px;line-height:16px;color:#333;letter-spacing:0.2px;">2/1/2022</div>
<div class="t" style="left:1283.6px;top:758.15px;font-size:11.7px;line-height:16px;color:#333;letter-spacing:0.2px;">7/29/2022</div>
<div class="a" style="left:677.00px;top:779.00px;width:111.00px;height:19.00px;background:#eaeaea;"></div>
<div class="a" style="left:789.00px;top:779.00px;width:94.00px;height:19.00px;background:#d0fc93;"></div>
<div class="a" style="left:884.00px;top:779.00px;width:105.00px;height:19.00px;background:#eaeaea;"></div>
<div class="a" style="left:990.00px;top:779.00px;width:87.00px;height:19.00px;background:#eaeaea;"></div>
<div class="a" style="left:1078.00px;top:779.00px;width:88.00px;height:19.00px;background:#eaeaea;"></div>
<div class="a" style="left:1167.00px;top:779.00px;width:102.00px;height:19.00px;background:#eaeaea;"></div>
<div class="a" style="left:1270.00px;top:779.00px;width:85.00px;height:19.00px;background:#eaeaea;"></div>
<div class="t" style="left:690.0px;top:779.15px;font-size:11.7px;line-height:16px;color:#333;letter-spacing:0.2px;">vm_azr-11</div>
<div class="t" style="left:802.8px;top:779.15px;font-size:11.7px;line-height:16px;color:#2f7f2a;letter-spacing:0.2px;">Running</div>
<div class="t" style="left:897.0px;top:779.15px;font-size:11.7px;line-height:16px;color:#333;letter-spacing:0.2px;">B4ms</div>
<div class="t" style="left:1002.7px;top:779.15px;font-size:11.7px;line-height:16px;color:#333;letter-spacing:0.2px;">4</div>
<div class="t" style="left:1091.2px;top:779.15px;font-size:11.7px;line-height:16px;color:#333;letter-spacing:0.2px;">16</div>
<div class="t" style="left:1180.4px;top:779.15px;font-size:11.7px;line-height:16px;color:#333;letter-spacing:0.2px;">2/1/2022</div>
<div class="t" style="left:1283.6px;top:779.15px;font-size:11.7px;line-height:16px;color:#333;letter-spacing:0.2px;">7/29/2022</div>
<div class="a" style="left:677.00px;top:799.00px;width:111.00px;height:13.70px;background:#eaeaea;"></div>
<div class="a" style="left:789.00px;top:799.00px;width:94.00px;height:13.70px;background:#d0fc93;"></div>
<div class="a" style="left:884.00px;top:799.00px;width:105.00px;height:13.70px;background:#eaeaea;"></div>
<div class="a" style="left:990.00px;top:799.00px;width:87.00px;height:13.70px;background:#eaeaea;"></div>
<div class="a" style="left:1078.00px;top:799.00px;width:88.00px;height:13.70px;background:#eaeaea;"></div>
<div class="a" style="left:1167.00px;top:799.00px;width:102.00px;height:13.70px;background:#eaeaea;"></div>
<div class="a" style="left:1270.00px;top:799.00px;width:85.00px;height:13.70px;background:#eaeaea;"></div>
<div class="t" style="left:690.0px;top:800.15px;font-size:11.7px;line-height:16px;color:#333;letter-spacing:0.2px;">vm_azr-12</div>
<div class="t" style="left:802.8px;top:800.15px;font-size:11.7px;line-height:16px;color:#2f7f2a;letter-spacing:0.2px;">Running</div>
<div class="t" style="left:897.0px;top:800.15px;font-size:11.7px;line-height:16px;color:#333;letter-spacing:0.2px;">B4ms</div>
<div class="t" style="left:1002.7px;top:800.15px;font-size:11.7px;line-height:16px;color:#333;letter-spacing:0.2px;">4</div>
<div class="t" style="left:1091.2px;top:800.15px;font-size:11.7px;line-height:16px;color:#333;letter-spacing:0.2px;">16</div>
<div class="t" style="left:1180.4px;top:800.15px;font-size:11.7px;line-height:16px;color:#333;letter-spacing:0.2px;">3/1/2022</div>
<div class="t" style="left:1283.6px;top:800.15px;font-size:11.7px;line-height:16px;color:#333;letter-spacing:0.2px;">7/29/2022</div>
<div class="a" style="left:8.00px;top:365.00px;width:140.00px;height:206.00px;background:#eaeaea;"></div>
<div class="a" style="left:149.00px;top:365.00px;width:191.00px;height:206.00px;background:#eaeaea;"></div>
<div class="t" style="left:8.0px;top:365.15px;font-size:11.7px;line-height:16px;color:#333;letter-spacing:0.2px;">NT_Department 03</div>
<div class="t" style="left:162.4px;top:365.15px;font-size:11.7px;line-height:16px;color:#333;letter-spacing:0.2px;">Amazon AWS</div>
<div class="a" style="left:8.00px;top:572.00px;width:140.00px;height:240.70px;background:#eaeaea;"></div>
<div class="a" style="left:149.00px;top:572.00px;width:191.00px;height:240.70px;background:#eaeaea;"></div>
<div class="t" style="left:8.0px;top:572.15px;font-size:11.7px;line-height:16px;color:#333;letter-spacing:0.2px;">NT_Department 01</div>
<div class="t" style="left:162.4px;top:572.15px;font-size:11.7px;line-height:16px;color:#333;letter-spacing:0.2px;">Microsoft Azure</div>
<div class="a" style="left:341.00px;top:365.00px;width:207.00px;height:61.00px;background:#eaeaea;"></div>
<div class="a" style="left:549.00px;top:365.00px;width:127.00px;height:61.00px;background:#eaeaea;"></div>
<div class="t" style="left:354.6px;top:365.15px;font-size:11.7px;line-height:16px;color:#333;letter-spacing:0.2px;">rg_App_1101</div>
<div class="t" style="left:562.8px;top:365.15px;font-size:11.7px;line-height:16px;color:#333;letter-spacing:0.2px;">EU (Frankfurt)</div>
<div class="a" style="left:341.00px;top:427.00px;width:207.00px;height:61.00px;background:#eaeaea;"></div>
<div class="a" style="left:549.00px;top:427.00px;width:127.00px;height:61.00px;background:#eaeaea;"></div>
<div class="t" style="left:354.6px;top:427.15px;font-size:11.7px;line-height:16px;color:#333;letter-spacing:0.2px;">rg_App_1102</div>
<div class="t" style="left:562.8px;top:427.15px;font-size:11.7px;line-height:16px;color:#333;letter-spacing:0.2px;">EU (Frankfurt)</div>
<div class="a" style="left:341.00px;top:489.00px;width:207.00px;height:61.00px;background:#eaeaea;"></div>
<div class="a" style="left:549.00px;top:489.00px;width:127.00px;height:61.00px;background:#eaeaea;"></div>
<div class="t" style="left:354.6px;top:490.15px;font-size:11.7px;line-height:16px;color:#333;letter-spacing:0.2px;">rg_App_1103</div>
<div class="t" style="left:562.8px;top:490.15px;font-size:11.7px;line-height:16px;color:#333;letter-spacing:0.2px;">EU (Frankfurt)</div>
<div class="a" style="left:341.00px;top:551.00px;width:207.00px;height:20.00px;background:#eaeaea;"></div>
<div class="a" style="left:549.00px;top:551.00px;width:127.00px;height:20.00px;background:#eaeaea;"></div>
<div class="t" style="left:354.6px;top:552.15px;font-size:11.7px;line-height:16px;color:#333;letter-spacing:0.2px;">rg_App_1104</div>
<div class="t" style="left:562.8px;top:552.15px;font-size:11.7px;line-height:16px;color:#333;letter-spacing:0.2px;">EU (Frankfurt)</div>
<div class="a" style="left:341.00px;top:572.00px;width:207.00px;height:61.00px;background:#eaeaea;"></div>
<div class="a" style="left:549.00px;top:572.00px;width:127.00px;height:61.00px;background:#eaeaea;"></div>
<div class="t" style="left:354.6px;top:572.15px;font-size:11.7px;line-height:16px;color:#333;letter-spacing:0.2px;">rg_App_23</div>
<div class="t" style="left:562.8px;top:572.15px;font-size:11.7px;line-height:16px;color:#333;letter-spacing:0.2px;">West Europe</div>
<div class="a" style="left:341.00px;top:634.00px;width:207.00px;height:61.00px;background:#eaeaea;"></div>
<div class="a" style="left:549.00px;top:634.00px;width:127.00px;height:61.00px;background:#eaeaea;"></div>
<div class="t" style="left:354.6px;top:634.15px;font-size:11.7px;line-height:16px;color:#333;letter-spacing:0.2px;">rg_App_Command_PreSales</div>
<div class="t" style="left:562.8px;top:634.15px;font-size:11.7px;line-height:16px;color:#333;letter-spacing:0.2px;">West Europe</div>
<div class="a" style="left:341.00px;top:696.00px;width:207.00px;height:61.00px;background:#eaeaea;"></div>
<div class="a" style="left:549.00px;top:696.00px;width:127.00px;height:61.00px;background:#eaeaea;"></div>
<div class="t" style="left:354.6px;top:696.15px;font-size:11.7px;line-height:16px;color:#333;letter-spacing:0.2px;">rg_Department_01</div>
<div class="t" style="left:562.8px;top:696.15px;font-size:11.7px;line-height:16px;color:#333;letter-spacing:0.2px;">West Europe</div>
<div class="a" style="left:341.00px;top:758.00px;width:207.00px;height:54.70px;background:#eaeaea;"></div>
<div class="a" style="left:549.00px;top:758.00px;width:127.00px;height:54.70px;background:#eaeaea;"></div>
<div class="t" style="left:354.6px;top:758.15px;font-size:11.7px;line-height:16px;color:#333;letter-spacing:0.2px;">rg_Department_02</div>
<div class="t" style="left:562.8px;top:758.15px;font-size:11.7px;line-height:16px;color:#333;letter-spacing:0.2px;">West Europe</div>
</div>
<div class="a" style="left:8.00px;top:812.70px;width:1347.00px;height:5.10px;background:#e6e9f1;"></div>
<div class="a" style="left:113.00px;top:812.70px;width:906.00px;height:5.10px;background:#b7b7b7;"></div>
<div class="a" style="left:1355.00px;top:364.60px;width:3.00px;height:448.10px;background:#e6e9f1;"></div>
<div class="a" style="left:1355.00px;top:364.60px;width:3.00px;height:242.30px;background:#b7b7b7;"></div>
<div class="a" style="left:7.00px;top:875.00px;width:1872.00px;height:167.00px;background:#fff;"></div>
<div class="a" style="left:9.00px;top:877.00px;width:131.00px;height:13.00px;background:#f3f3f3;"></div>
<div class="t" style="left:33.4px;top:876.15px;font-size:11.7px;line-height:16px;color:#444;letter-spacing:0.2px;">Cloud Provider</div>
<div class="a" style="left:140.00px;top:877.00px;width:109.00px;height:13.00px;background:#f3f3f3;"></div>
<div class="t" style="left:161.1px;top:876.15px;font-size:11.7px;line-height:16px;color:#444;letter-spacing:0.2px;">vServer - ID</div>
<div class="a" style="left:250.00px;top:877.00px;width:125.00px;height:13.00px;background:#f3f3f3;"></div>
<div class="t" style="left:270.5px;top:876.15px;font-size:11.7px;line-height:16px;color:#444;letter-spacing:0.2px;">Virtual Network</div>
<div class="a" style="left:376.00px;top:877.00px;width:113.00px;height:13.00px;background:#f3f3f3;"></div>
<div class="t" style="left:377.1px;top:876.15px;font-size:11.7px;line-height:16px;color:#444;letter-spacing:0.2px;">IP-Address (Private)</div>
<div class="a" style="left:490.00px;top:877.00px;width:125.00px;height:13.00px;background:#f3f3f3;"></div>
<div class="t" style="left:499.3px;top:876.15px;font-size:11.7px;line-height:16px;color:#444;letter-spacing:0.2px;">IP-Address (Public)</div>
<div class="a" style="left:616.00px;top:877.00px;width:153.00px;height:13.00px;background:#f3f3f3;"></div>
<div class="t" style="left:680.2px;top:876.15px;font-size:11.7px;line-height:16px;color:#444;letter-spacing:0.2px;">URL</div>
<div class="a" style="left:770.00px;top:877.00px;width:294.00px;height:13.00px;background:#f3f3f3;"></div>
<div class="t" style="left:871.3px;top:876.15px;font-size:11.7px;line-height:16px;color:#444;letter-spacing:0.2px;">DNS (Hostname)</div>
<div class="a" style="left:1065.00px;top:877.00px;width:193.00px;height:13.00px;background:#f3f3f3;"></div>
<div class="t" style="left:1126.6px;top:876.15px;font-size:11.7px;line-height:16px;color:#444;letter-spacing:0.2px;">vServer - OS</div>
<div class="a" style="left:1260.00px;top:877.00px;width:128.00px;height:13.00px;background:#f3f3f3;"></div>
<div class="t" style="left:1293.4px;top:876.15px;font-size:11.7px;line-height:16px;color:#444;letter-spacing:0.2px;">Application</div>
<div class="a" style="left:1389.00px;top:877.00px;width:144.00px;height:13.00px;background:#f3f3f3;"></div>
<div class="t" style="left:1443.4px;top:876.15px;font-size:11.7px;line-height:16px;color:#444;letter-spacing:0.2px;">Usage</div>
<div class="a" style="left:1534.00px;top:877.00px;width:211.00px;height:13.00px;background:#f3f3f3;"></div>
<div class="t" style="left:1618.7px;top:876.15px;font-size:11.7px;line-height:16px;color:#444;letter-spacing:0.2px;">Service</div>
<div class="a" style="left:1746.00px;top:877.00px;width:132.00px;height:13.00px;background:#f3f3f3;"></div>
<div class="t" style="left:1756.9px;top:876.15px;font-size:11.7px;line-height:16px;color:#444;letter-spacing:0.2px;">Responsible Person</div>
<div class="a" style="left:9.00px;top:891.00px;width:130.00px;height:5.00px;background:#eaeaea;"></div>
<div class="a" style="left:140.00px;top:891.00px;width:109.00px;height:5.00px;background:#eaeaea;"></div>
<div class="a" style="left:250.00px;top:891.00px;width:126.00px;height:5.00px;background:#eaeaea;"></div>
<div class="a" style="left:377.00px;top:891.00px;width:113.00px;height:5.00px;background:#eaeaea;"></div>
<div class="a" style="left:491.00px;top:891.00px;width:124.00px;height:5.00px;background:#eaeaea;"></div>
<div class="a" style="left:616.00px;top:891.00px;width:154.00px;height:5.00px;background:#eaeaea;"></div>
<div class="a" style="left:771.00px;top:891.00px;width:295.00px;height:5.00px;background:#eaeaea;"></div>
<div class="a" style="left:1067.00px;top:891.00px;width:194.00px;height:5.00px;background:#eaeaea;"></div>
<div class="a" style="left:1262.00px;top:891.00px;width:128.00px;height:5.00px;background:#eaeaea;"></div>
<div class="a" style="left:1391.00px;top:891.00px;width:145.00px;height:5.00px;background:#eaeaea;"></div>
<div class="a" style="left:1537.00px;top:891.00px;width:210.00px;height:5.00px;background:#eaeaea;"></div>
<div class="a" style="left:1748.00px;top:891.00px;width:127.00px;height:5.00px;background:#eaeaea;"></div>
<div class="a" style="left:9.00px;top:897.00px;width:130.00px;height:20.00px;background:#eaeaea;"></div>
<div class="a" style="left:140.00px;top:897.00px;width:109.00px;height:20.00px;background:#eaeaea;"></div>
<div class="a" style="left:250.00px;top:897.00px;width:126.00px;height:20.00px;background:#eaeaea;"></div>
<div class="a" style="left:377.00px;top:897.00px;width:113.00px;height:20.00px;background:#eaeaea;"></div>
<div class="a" style="left:491.00px;top:897.00px;width:124.00px;height:20.00px;background:#eaeaea;"></div>
<div class="a" style="left:616.00px;top:897.00px;width:154.00px;height:20.00px;background:#eaeaea;"></div>
<div class="a" style="left:771.00px;top:897.00px;width:295.00px;height:20.00px;background:#eaeaea;"></div>
<div class="a" style="left:1067.00px;top:897.00px;width:194.00px;height:20.00px;background:#eaeaea;"></div>
<div class="a" style="left:1262.00px;top:897.00px;width:128.00px;height:20.00px;background:#eaeaea;"></div>
<div class="a" style="left:1391.00px;top:897.00px;width:145.00px;height:20.00px;background:#eaeaea;"></div>
<div class="a" style="left:1537.00px;top:897.00px;width:210.00px;height:20.00px;background:#eaeaea;"></div>
<div class="a" style="left:1748.00px;top:897.00px;width:127.00px;height:20.00px;background:#eaeaea;"></div>
<div class="t" style="left:22.3px;top:897.65px;font-size:11.7px;line-height:16px;color:#333;letter-spacing:0.2px;">Microsoft Azure</div>
<div class="t" style="left:154.1px;top:897.65px;font-size:11.7px;line-height:16px;color:#333;letter-spacing:0.2px;">vm_azr-11</div>
<div class="t" style="left:263.1px;top:897.65px;font-size:11.7px;line-height:16px;color:#333;letter-spacing:0.2px;">vnet_customer</div>
<div class="t" style="left:391.1px;top:897.65px;font-size:11.7px;line-height:16px;color:#333;letter-spacing:0.2px;">10.0.5.11</div>
<div class="t" style="left:504.4px;top:897.65px;font-size:11.7px;line-height:16px;color:#333;letter-spacing:0.2px;">51.105.109.11</div>
<div class="t" style="left:784.7px;top:897.65px;font-size:11.7px;line-height:16px;color:#333;letter-spacing:0.2px;">azure-dns-ns1-011</div>
<div class="t" style="left:1080.5px;top:897.65px;font-size:11.7px;line-height:16px;color:#333;letter-spacing:0.2px;">Linux (centos 7.4.1708)</div>
<div class="a" style="left:9.00px;top:918.00px;width:130.00px;height:20.00px;background:#eaeaea;"></div>
<div class="a" style="left:140.00px;top:918.00px;width:109.00px;height:20.00px;background:#eaeaea;"></div>
<div class="a" style="left:250.00px;top:918.00px;width:126.00px;height:20.00px;background:#eaeaea;"></div>
<div class="a" style="left:377.00px;top:918.00px;width:113.00px;height:20.00px;background:#eaeaea;"></div>
<div class="a" style="left:491.00px;top:918.00px;width:124.00px;height:20.00px;background:#eaeaea;"></div>
<div class="a" style="left:616.00px;top:918.00px;width:154.00px;height:20.00px;background:#eaeaea;"></div>
<div class="a" style="left:771.00px;top:918.00px;width:295.00px;height:20.00px;background:#eaeaea;"></div>
<div class="a" style="left:1067.00px;top:918.00px;width:194.00px;height:20.00px;background:#eaeaea;"></div>
<div class="a" style="left:1262.00px;top:918.00px;width:128.00px;height:20.00px;background:#eaeaea;"></div>
<div class="a" style="left:1391.00px;top:918.00px;width:145.00px;height:20.00px;background:#eaeaea;"></div>
<div class="a" style="left:1537.00px;top:918.00px;width:210.00px;height:20.00px;background:#eaeaea;"></div>
<div class="a" style="left:1748.00px;top:918.00px;width:127.00px;height:20.00px;background:#eaeaea;"></div>
<div class="t" style="left:22.3px;top:918.32px;font-size:11.7px;line-height:16px;color:#333;letter-spacing:0.2px;">Microsoft Azure</div>
<div class="t" style="left:154.1px;top:918.32px;font-size:11.7px;line-height:16px;color:#333;letter-spacing:0.2px;">vm_azr-12</div>
<div class="t" style="left:263.1px;top:918.32px;font-size:11.7px;line-height:16px;color:#333;letter-spacing:0.2px;">vnet_customer</div>
<div class="t" style="left:391.1px;top:918.32px;font-size:11.7px;line-height:16px;color:#333;letter-spacing:0.2px;">10.0.5.12</div>
<div class="t" style="left:504.4px;top:918.32px;font-size:11.7px;line-height:16px;color:#333;letter-spacing:0.2px;">51.105.109.12</div>
<div class="t" style="left:784.7px;top:918.32px;font-size:11.7px;line-height:16px;color:#333;letter-spacing:0.2px;">azure-dns-ns1-012</div>
<div class="t" style="left:1080.5px;top:918.32px;font-size:11.7px;line-height:16px;color:#333;letter-spacing:0.2px;">Linux (centos 7.4.1708)</div>
<div class="a" style="left:9.00px;top:939.00px;width:130.00px;height:19.00px;background:#eaeaea;"></div>
<div class="a" style="left:140.00px;top:939.00px;width:109.00px;height:19.00px;background:#eaeaea;"></div>
<div class="a" style="left:250.00px;top:939.00px;width:126.00px;height:19.00px;background:#eaeaea;"></div>
<div class="a" style="left:377.00px;top:939.00px;width:113.00px;height:19.00px;background:#eaeaea;"></div>
<div class="a" style="left:491.00px;top:939.00px;width:124.00px;height:19.00px;background:#eaeaea;"></div>
<div class="a" style="left:616.00px;top:939.00px;width:154.00px;height:19.00px;background:#eaeaea;"></div>
<div class="a" style="left:771.00px;top:939.00px;width:295.00px;height:19.00px;background:#eaeaea;"></div>
<div class="a" style="left:1067.00px;top:939.00px;width:194.00px;height:19.00px;background:#eaeaea;"></div>
<div class="a" style="left:1262.00px;top:939.00px;width:128.00px;height:19.00px;background:#eaeaea;"></div>
<div class="a" style="left:1391.00px;top:939.00px;width:145.00px;height:19.00px;background:#eaeaea;"></div>
<div class="a" style="left:1537.00px;top:939.00px;width:210.00px;height:19.00px;background:#eaeaea;"></div>
<div class="a" style="left:1748.00px;top:939.00px;width:127.00px;height:19.00px;background:#eaeaea;"></div>
<div class="t" style="left:22.3px;top:938.99px;font-size:11.7px;line-height:16px;color:#333;letter-spacing:0.2px;">Microsoft Azure</div>
<div class="t" style="left:154.1px;top:938.99px;font-size:11.7px;line-height:16px;color:#333;letter-spacing:0.2px;">vm_azr-13</div>
<div class="t" style="left:263.1px;top:938.99px;font-size:11.7px;line-height:16px;color:#333;letter-spacing:0.2px;">vnet_customer</div>
<div class="t" style="left:391.1px;top:938.99px;font-size:11.7px;line-height:16px;color:#333;letter-spacing:0.2px;">10.0.5.13</div>
<div class="t" style="left:504.4px;top:938.99px;font-size:11.7px;line-height:16px;color:#333;letter-spacing:0.2px;">51.105.109.13</div>
<div class="t" style="left:629.4px;top:938.99px;font-size:11.7px;line-height:16px;color:#333;letter-spacing:0.2px;">presales.fntgrp.com</div>
<div class="t" style="left:784.7px;top:938.99px;font-size:11.7px;line-height:16px;color:#333;letter-spacing:0.2px;">azure-dns-ns1-013</div>
<div class="t" style="left:1080.5px;top:938.99px;font-size:11.7px;line-height:16px;color:#333;letter-spacing:0.2px;">Linux (centos 7.4.1708)</div>
<div class="t" style="left:1276.0px;top:938.99px;font-size:11.7px;line-height:16px;color:#333;letter-spacing:0.2px;">FNT Command</div>
<div class="t" style="left:1404.4px;top:938.99px;font-size:11.7px;line-height:16px;color:#333;letter-spacing:0.2px;">Application Server</div>
<div class="t" style="left:1550.6px;top:938.99px;font-size:11.7px;line-height:16px;color:#333;letter-spacing:0.2px;">FNT Command_PreSales_Ref</div>
<div class="t" style="left:1762.4px;top:938.99px;font-size:11.7px;line-height:16px;color:#333;letter-spacing:0.2px;">Paul Williamson</div>
<div class="a" style="left:9.00px;top:959.00px;width:130.00px;height:20.00px;background:#eaeaea;"></div>
<div class="a" style="left:140.00px;top:959.00px;width:109.00px;height:20.00px;background:#eaeaea;"></div>
<div class="a" style="left:250.00px;top:959.00px;width:126.00px;height:20.00px;background:#eaeaea;"></div>
<div class="a" style="left:377.00px;top:959.00px;width:113.00px;height:20.00px;background:#eaeaea;"></div>
<div class="a" style="left:491.00px;top:959.00px;width:124.00px;height:20.00px;background:#eaeaea;"></div>
<div class="a" style="left:616.00px;top:959.00px;width:154.00px;height:20.00px;background:#eaeaea;"></div>
<div class="a" style="left:771.00px;top:959.00px;width:295.00px;height:20.00px;background:#eaeaea;"></div>
<div class="a" style="left:1067.00px;top:959.00px;width:194.00px;height:20.00px;background:#eaeaea;"></div>
<div class="a" style="left:1262.00px;top:959.00px;width:128.00px;height:20.00px;background:#eaeaea;"></div>
<div class="a" style="left:1391.00px;top:959.00px;width:145.00px;height:20.00px;background:#eaeaea;"></div>
<div class="a" style="left:1537.00px;top:959.00px;width:210.00px;height:20.00px;background:#eaeaea;"></div>
<div class="a" style="left:1748.00px;top:959.00px;width:127.00px;height:20.00px;background:#eaeaea;"></div>
<div class="t" style="left:22.3px;top:959.66px;font-size:11.7px;line-height:16px;color:#333;letter-spacing:0.2px;">Microsoft Azure</div>
<div class="t" style="left:154.1px;top:959.66px;font-size:11.7px;line-height:16px;color:#333;letter-spacing:0.2px;">vm_azr-14</div>
<div class="t" style="left:263.1px;top:959.66px;font-size:11.7px;line-height:16px;color:#333;letter-spacing:0.2px;">vnet_customer</div>
<div class="t" style="left:391.1px;top:959.66px;font-size:11.7px;line-height:16px;color:#333;letter-spacing:0.2px;">10.0.5.14</div>
<div class="t" style="left:504.4px;top:959.66px;font-size:11.7px;line-height:16px;color:#333;letter-spacing:0.2px;">51.105.109.14</div>
<div class="t" style="left:629.4px;top:959.66px;font-size:11.7px;line-height:16px;color:#333;letter-spacing:0.2px;">presales.fntgrp.com</div>
<div class="t" style="left:784.7px;top:959.66px;font-size:11.7px;line-height:16px;color:#333;letter-spacing:0.2px;">azure-dns-ns1-014</div>
<div class="t" style="left:1080.5px;top:959.66px;font-size:11.7px;line-height:16px;color:#333;letter-spacing:0.2px;">Linux (centos 7.4.1708)</div>
<div class="t" style="left:1276.0px;top:959.66px;font-size:11.7px;line-height:16px;color:#333;letter-spacing:0.2px;">FNT Command</div>
<div class="t" style="left:1404.4px;top:959.66px;font-size:11.7px;line-height:16px;color:#333;letter-spacing:0.2px;">DB-Server-01</div>
<div class="t" style="left:1550.6px;top:959.66px;font-size:11.7px;line-height:16px;color:#333;letter-spacing:0.2px;">FNT Command_PreSales_Ref</div>
<div class="t" style="left:1762.4px;top:959.66px;font-size:11.7px;line-height:16px;color:#333;letter-spacing:0.2px;">Paul Williamson</div>
<div class="a" style="left:9.00px;top:980.00px;width:130.00px;height:20.00px;background:#eaeaea;"></div>
<div class="a" style="left:140.00px;top:980.00px;width:109.00px;height:20.00px;background:#eaeaea;"></div>
<div class="a" style="left:250.00px;top:980.00px;width:126.00px;height:20.00px;background:#eaeaea;"></div>
<div class="a" style="left:377.00px;top:980.00px;width:113.00px;height:20.00px;background:#eaeaea;"></div>
<div class="a" style="left:491.00px;top:980.00px;width:124.00px;height:20.00px;background:#eaeaea;"></div>
<div class="a" style="left:616.00px;top:980.00px;width:154.00px;height:20.00px;background:#eaeaea;"></div>
<div class="a" style="left:771.00px;top:980.00px;width:295.00px;height:20.00px;background:#eaeaea;"></div>
<div class="a" style="left:1067.00px;top:980.00px;width:194.00px;height:20.00px;background:#eaeaea;"></div>
<div class="a" style="left:1262.00px;top:980.00px;width:128.00px;height:20.00px;background:#eaeaea;"></div>
<div class="a" style="left:1391.00px;top:980.00px;width:145.00px;height:20.00px;background:#eaeaea;"></div>
<div class="a" style="left:1537.00px;top:980.00px;width:210.00px;height:20.00px;background:#eaeaea;"></div>
<div class="a" style="left:1748.00px;top:980.00px;width:127.00px;height:20.00px;background:#eaeaea;"></div>
<div class="t" style="left:22.3px;top:980.33px;font-size:11.7px;line-height:16px;color:#333;letter-spacing:0.2px;">Microsoft Azure</div>
<div class="t" style="left:154.1px;top:980.33px;font-size:11.7px;line-height:16px;color:#333;letter-spacing:0.2px;">vm_azr-15</div>
<div class="t" style="left:263.1px;top:980.33px;font-size:11.7px;line-height:16px;color:#333;letter-spacing:0.2px;">vnet_customer</div>
<div class="t" style="left:391.1px;top:980.33px;font-size:11.7px;line-height:16px;color:#333;letter-spacing:0.2px;">10.0.5.15</div>
<div class="t" style="left:504.4px;top:980.33px;font-size:11.7px;line-height:16px;color:#333;letter-spacing:0.2px;">51.105.109.15</div>
<div class="t" style="left:629.4px;top:980.33px;font-size:11.7px;line-height:16px;color:#333;letter-spacing:0.2px;">presales.fntgrp.com</div>
<div class="t" style="left:784.7px;top:980.33px;font-size:11.7px;line-height:16px;color:#333;letter-spacing:0.2px;">azure-dns-ns1-015</div>
<div class="t" style="left:1080.5px;top:980.33px;font-size:11.7px;line-height:16px;color:#333;letter-spacing:0.2px;">Linux (centos 7.4.1708)</div>
<div class="t" style="left:1276.0px;top:980.33px;font-size:11.7px;line-height:16px;color:#333;letter-spacing:0.2px;">FNT Command</div>
<div class="t" style="left:1404.4px;top:980.33px;font-size:11.7px;line-height:16px;color:#333;letter-spacing:0.2px;">DB-Server-02</div>
<div class="t" style="left:1550.6px;top:980.33px;font-size:11.7px;line-height:16px;color:#333;letter-spacing:0.2px;">FNT Command_PreSales_Ref</div>
<div class="t" style="left:1762.4px;top:980.33px;font-size:11.7px;line-height:16px;color:#333;letter-spacing:0.2px;">Paul Williamson</div>
<div class="a" style="left:9.00px;top:1001.00px;width:130.00px;height:19.00px;background:#eaeaea;"></div>
<div class="a" style="left:140.00px;top:1001.00px;width:109.00px;height:19.00px;background:#eaeaea;"></div>
<div class="a" style="left:250.00px;top:1001.00px;width:126.00px;height:19.00px;background:#eaeaea;"></div>
<div class="a" style="left:377.00px;top:1001.00px;width:113.00px;height:19.00px;background:#eaeaea;"></div>
<div class="a" style="left:491.00px;top:1001.00px;width:124.00px;height:19.00px;background:#eaeaea;"></div>
<div class="a" style="left:616.00px;top:1001.00px;width:154.00px;height:19.00px;background:#eaeaea;"></div>
<div class="a" style="left:771.00px;top:1001.00px;width:295.00px;height:19.00px;background:#eaeaea;"></div>
<div class="a" style="left:1067.00px;top:1001.00px;width:194.00px;height:19.00px;background:#eaeaea;"></div>
<div class="a" style="left:1262.00px;top:1001.00px;width:128.00px;height:19.00px;background:#eaeaea;"></div>
<div class="a" style="left:1391.00px;top:1001.00px;width:145.00px;height:19.00px;background:#eaeaea;"></div>
<div class="a" style="left:1537.00px;top:1001.00px;width:210.00px;height:19.00px;background:#eaeaea;"></div>
<div class="a" style="left:1748.00px;top:1001.00px;width:127.00px;height:19.00px;background:#eaeaea;"></div>
<div class="t" style="left:22.3px;top:1001.00px;font-size:11.7px;line-height:16px;color:#333;letter-spacing:0.2px;">Microsoft Azure</div>
<div class="t" style="left:154.1px;top:1001.00px;font-size:11.7px;line-height:16px;color:#333;letter-spacing:0.2px;">vm_azr-16</div>
<div class="t" style="left:263.1px;top:1001.00px;font-size:11.7px;line-height:16px;color:#333;letter-spacing:0.2px;">vnet_customer</div>
<div class="t" style="left:391.1px;top:1001.00px;font-size:11.7px;line-height:16px;color:#333;letter-spacing:0.2px;">10.0.5.16</div>
<div class="t" style="left:504.4px;top:1001.00px;font-size:11.7px;line-height:16px;color:#333;letter-spacing:0.2px;">51.105.109.16</div>
<div class="t" style="left:784.7px;top:1001.00px;font-size:11.7px;line-height:16px;color:#333;letter-spacing:0.2px;">azure-dns-ns1-016</div>
<div class="t" style="left:1080.5px;top:1001.00px;font-size:11.7px;line-height:16px;color:#333;letter-spacing:0.2px;">Linux (centos 7.4.1708)</div>
<div class="a" style="left:9.00px;top:1021.00px;width:130.00px;height:20.00px;background:#eaeaea;"></div>
<div class="a" style="left:140.00px;top:1021.00px;width:109.00px;height:20.00px;background:#eaeaea;"></div>
<div class="a" style="left:250.00px;top:1021.00px;width:126.00px;height:20.00px;background:#eaeaea;"></div>
<div class="a" style="left:377.00px;top:1021.00px;width:113.00px;height:20.00px;background:#eaeaea;"></div>
<div class="a" style="left:491.00px;top:1021.00px;width:124.00px;height:20.00px;background:#eaeaea;"></div>
<div class="a" style="left:616.00px;top:1021.00px;width:154.00px;height:20.00px;background:#eaeaea;"></div>
<div class="a" style="left:771.00px;top:1021.00px;width:295.00px;height:20.00px;background:#eaeaea;"></div>
<div class="a" style="left:1067.00px;top:1021.00px;width:194.00px;height:20.00px;background:#eaeaea;"></div>
<div class="a" style="left:1262.00px;top:1021.00px;width:128.00px;height:20.00px;background:#eaeaea;"></div>
<div class="a" style="left:1391.00px;top:1021.00px;width:145.00px;height:20.00px;background:#eaeaea;"></div>
<div class="a" style="left:1537.00px;top:1021.00px;width:210.00px;height:20.00px;background:#eaeaea;"></div>
<div class="a" style="left:1748.00px;top:1021.00px;width:127.00px;height:20.00px;background:#eaeaea;"></div>
<div class="t" style="left:22.3px;top:1021.67px;font-size:11.7px;line-height:16px;color:#333;letter-spacing:0.2px;">Microsoft Azure</div>
<div class="t" style="left:154.1px;top:1021.67px;font-size:11.7px;line-height:16px;color:#333;letter-spacing:0.2px;">vm_azr-17</div>
<div class="t" style="left:263.1px;top:1021.67px;font-size:11.7px;line-height:16px;color:#333;letter-spacing:0.2px;">vnet_customer</div>
<div class="t" style="left:391.1px;top:1021.67px;font-size:11.7px;line-height:16px;color:#333;letter-spacing:0.2px;">10.0.5.17</div>
<div class="t" style="left:504.4px;top:1021.67px;font-size:11.7px;line-height:16px;color:#333;letter-spacing:0.2px;">51.105.109.17</div>
<div class="t" style="left:784.7px;top:1021.67px;font-size:11.7px;line-height:16px;color:#333;letter-spacing:0.2px;">azure-dns-ns1-017</div>
<div class="t" style="left:1080.5px;top:1021.67px;font-size:11.7px;line-height:16px;color:#333;letter-spacing:0.2px;">Linux (centos 7.4.1708)</div>
<div class="a" style="left:9.00px;top:1042.00px;width:130.00px;height:0.00px;background:#eaeaea;"></div>
<div class="a" style="left:140.00px;top:1042.00px;width:109.00px;height:0.00px;background:#eaeaea;"></div>
<div class="a" style="left:250.00px;top:1042.00px;width:126.00px;height:0.00px;background:#eaeaea;"></div>
<div class="a" style="left:377.00px;top:1042.00px;width:113.00px;height:0.00px;background:#eaeaea;"></div>
<div class="a" style="left:491.00px;top:1042.00px;width:124.00px;height:0.00px;background:#eaeaea;"></div>
<div class="a" style="left:616.00px;top:1042.00px;width:154.00px;height:0.00px;background:#eaeaea;"></div>
<div class="a" style="left:771.00px;top:1042.00px;width:295.00px;height:0.00px;background:#eaeaea;"></div>
<div class="a" style="left:1067.00px;top:1042.00px;width:194.00px;height:0.00px;background:#eaeaea;"></div>
<div class="a" style="left:1262.00px;top:1042.00px;width:128.00px;height:0.00px;background:#eaeaea;"></div>
<div class="a" style="left:1391.00px;top:1042.00px;width:145.00px;height:0.00px;background:#eaeaea;"></div>
<div class="a" style="left:1537.00px;top:1042.00px;width:210.00px;height:0.00px;background:#eaeaea;"></div>
<div class="a" style="left:1748.00px;top:1042.00px;width:127.00px;height:0.00px;background:#eaeaea;"></div>
<div class="a" style="left:1875.00px;top:891.00px;width:4.00px;height:151.00px;background:#e6e9f1;"></div>
<svg class="a" style="left:0;top:0" width="1884" height="1042" viewBox="0 0 1884 1042"><path d="M1700.50,452.30 A70.6,70.6 0 0 1 1629.90,522.90 L1629.90,497.70 A45.4,45.4 0 0 0 1675.30,452.30 Z" fill="#929da5" stroke="#fff" stroke-width="1"/><path d="M1629.90,522.90 A70.6,70.6 0 0 1 1597.85,515.21 L1609.29,492.75 A45.4,45.4 0 0 0 1629.90,497.70 Z" fill="#a6aeb4" stroke="#fff" stroke-width="1"/><path d="M1597.85,515.21 A70.6,70.6 0 1 1 1700.50,452.30 L1675.30,452.30 A45.4,45.4 0 1 0 1609.29,492.75 Z" fill="#bcc3c6" stroke="#fff" stroke-width="1"/><path d="M1629.90,452.30 L1675.30,452.30 A45.4,45.4 0 0 1 1629.90,497.70 Z" fill="#63727c" stroke="#fff" stroke-width="1"/><path d="M1629.90,452.30 L1629.90,497.70 A45.4,45.4 0 1 1 1675.30,452.30 Z" fill="#8f9ba3" stroke="#fff" stroke-width="1"/><circle cx="1629.9" cy="452.3" r="45.4" fill="none" stroke="#fff" stroke-width="2"/><path d="M1705.30,715.30 A75.5,75.5 0 0 1 1629.80,790.80 L1629.80,763.60 A48.3,48.3 0 0 0 1678.10,715.30 Z" fill="#63737d" stroke="#fff" stroke-width="1"/><path d="M1629.80,790.80 A75.5,75.5 0 0 1 1576.41,661.91 L1595.65,681.15 A48.3,48.3 0 0 0 1629.80,763.60 Z" fill="#808d96" stroke="#fff" stroke-width="1"/><path d="M1576.41,661.91 A75.5,75.5 0 0 1 1606.47,643.50 L1614.87,669.36 A48.3,48.3 0 0 0 1595.65,681.15 Z" fill="#8e9aa2" stroke="#fff" stroke-width="1"/><path d="M1606.47,643.50 A75.5,75.5 0 0 1 1674.18,654.22 L1658.19,676.22 A48.3,48.3 0 0 0 1614.87,669.36 Z" fill="#a0aab0" stroke="#fff" stroke-width="1"/><path d="M1674.18,654.22 A75.5,75.5 0 0 1 1705.30,715.30 L1678.10,715.30 A48.3,48.3 0 0 0 1658.19,676.22 Z" fill="#cbbfb0" stroke="#fff" stroke-width="1"/><path d="M1629.80,715.30 L1678.10,715.30 A48.3,48.3 0 0 1 1629.80,763.60 Z" fill="#2e3e4d" stroke="#fff" stroke-width="1"/><path d="M1629.80,715.30 L1629.80,763.60 A48.3,48.3 0 1 1 1658.19,676.22 Z" fill="#63737d" stroke="#fff" stroke-width="1"/><path d="M1629.80,715.30 L1658.19,676.22 A48.3,48.3 0 0 1 1678.10,715.30 Z" fill="#b2a28c" stroke="#fff" stroke-width="1"/><circle cx="1629.8" cy="715.3" r="48.3" fill="none" stroke="#fff" stroke-width="2"/></svg>
<div class="t" style="left:1471.0px;top:365.48px;font-size:11.3px;line-height:16px;color:#5f707b;letter-spacing:0.4px;-webkit-text-stroke:0">West Europe Microsoft</div>
<div class="t" style="left:1471.0px;top:378.08px;font-size:11.3px;line-height:16px;color:#5f707b;letter-spacing:0.4px;-webkit-text-stroke:0">Azure</div>
<div class="t" style="left:1683.8px;top:505.48px;font-size:11.3px;line-height:16px;color:#46555f;letter-spacing:0.4px;-webkit-text-stroke:0">EU (Frankfurt) Amazon</div>
<div class="t" style="left:1683.8px;top:517.68px;font-size:11.3px;line-height:16px;color:#46555f;letter-spacing:0.4px;-webkit-text-stroke:0">AWS</div>
<div class="t" style="left:1520.0px;top:523.08px;font-size:11.3px;line-height:16px;color:#5f707b;letter-spacing:0.4px;-webkit-text-stroke:0">US Central Microsoft</div>
<div class="t" style="left:1520.0px;top:536.08px;font-size:11.3px;line-height:16px;color:#5f707b;letter-spacing:0.4px;-webkit-text-stroke:0">Azure</div>
<div class="t" style="left:1586.9px;top:622.18px;font-size:11.3px;line-height:16px;color:#5f707b;letter-spacing:0.4px;-webkit-text-stroke:0">B8ms Microsoft Azure</div>
<div class="t" style="left:1472.3px;top:635.08px;font-size:11.3px;line-height:16px;color:#5f707b;letter-spacing:0.4px;-webkit-text-stroke:0">B4ms Microsoft Azure</div>
<div class="t" style="left:1702.3px;top:665.88px;font-size:11.3px;line-height:16px;color:#b5a68f;letter-spacing:0.4px;-webkit-text-stroke:0">B16ms Microsoft Partner</div>
<div class="t" style="left:1702.3px;top:678.98px;font-size:11.3px;line-height:16px;color:#b5a68f;letter-spacing:0.4px;-webkit-text-stroke:0">Network</div>
<div class="t" style="left:1434.1px;top:744.98px;font-size:11.3px;line-height:16px;color:#5f707b;letter-spacing:0.4px;-webkit-text-stroke:0">B16ms Microsoft Azure</div>
<div class="t" style="left:1687.9px;top:772.28px;font-size:11.3px;line-height:16px;color:#2e3e4d;letter-spacing:0.4px;-webkit-text-stroke:0">t3.medium Amazon AWS</div>
</div></body></html>
